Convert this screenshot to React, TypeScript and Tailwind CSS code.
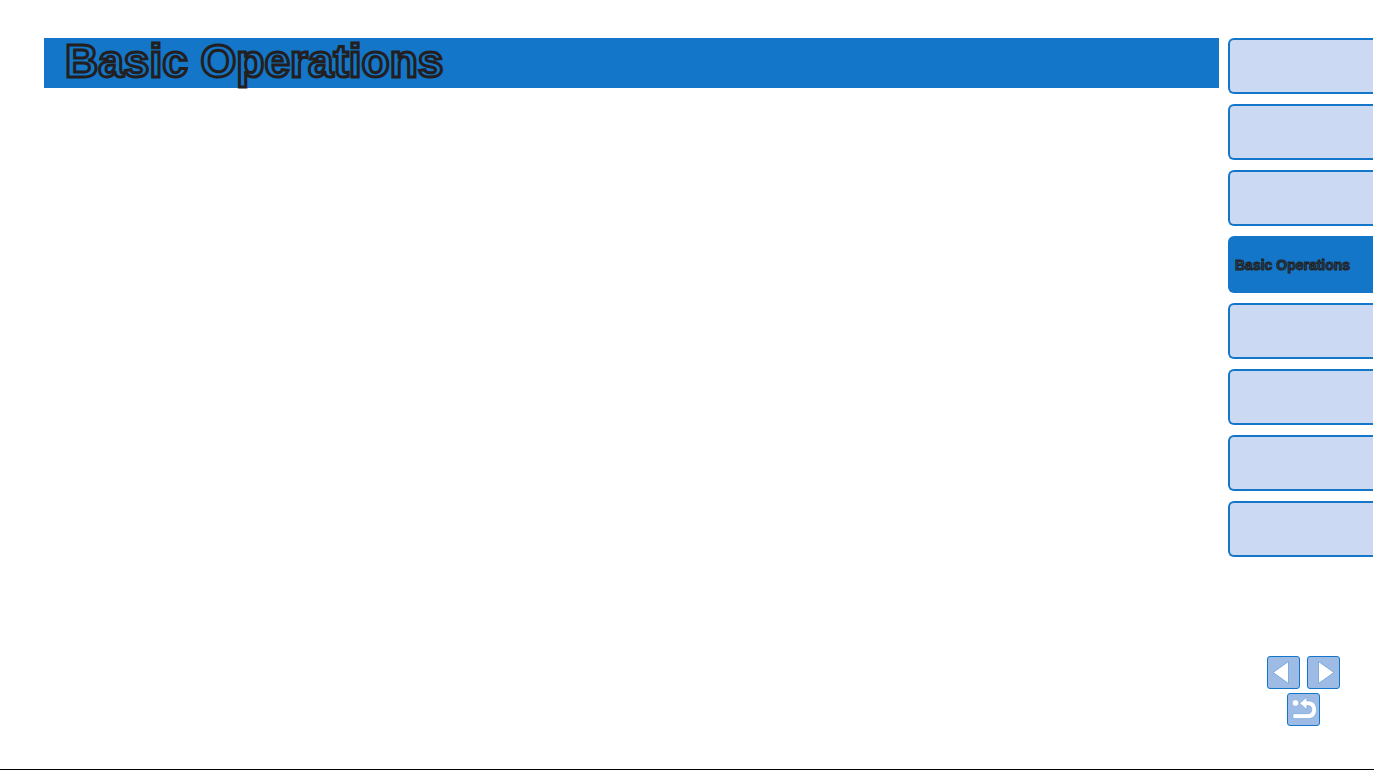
import type { ReactNode } from "react";

const sections = ["", "", "", "Basic Operations", "", "", "", ""];

function NavButton({ label, children }: { label: string; children: ReactNode }) {
  return (
    <button
      type="button"
      aria-label={label}
      className="flex size-[33px] items-center justify-center rounded-[3px] border border-[#1376c8] bg-[#9dbbe5]"
    >
      <svg viewBox="0 0 33 33" className="size-[33px] shrink-0" aria-hidden="true">
        {children}
      </svg>
    </button>
  );
}

export default function App() {
  return (
    <div className="flex min-h-screen flex-col border-b border-black bg-white font-['Liberation_Sans',Arial,sans-serif]">
      <div className="flex grow pt-[38px] pr-px pl-11">
        <main className="grow">
          <header className="flex h-[50px] items-center bg-[#1376c8] pl-[21px]">
            <h1 className="pb-1 text-[46px] leading-[46px] font-bold whitespace-nowrap text-[#1376c8] [-webkit-text-stroke:3px_#231f20]">
              Basic Operations
            </h1>
          </header>
        </main>
        <aside className="ml-[9px] flex w-[145px] shrink-0 flex-col">
          <nav aria-label="Sections" className="flex h-[519px] flex-col justify-between">
            {sections.map((title, index) => (
              <a
                key={index}
                href={`#section-${index + 1}`}
                aria-label={title || `Section ${index + 1}`}
                className={
                  title
                    ? "flex h-[57px] items-center rounded-l-md bg-[#1376c8] pt-px pl-[7px] text-[14px] font-bold whitespace-nowrap text-[#1f4468] [-webkit-text-stroke:1px_#231f20]"
                    : "flex h-14 items-center rounded-l-md border-2 border-r-0 border-[#1376c8] bg-[#cbd9f3]"
                }
              >
                {title}
              </a>
            ))}
          </nav>
          <div className="mt-[99px] ml-[39px] flex w-[73px] flex-wrap justify-center gap-x-[7px] gap-y-1">
            <NavButton label="Previous page">
              <path d="M6 16.5 21.5 5.5V27.5Z" fill="#fff" stroke="#5b98d6" strokeWidth="0.7" />
            </NavButton>
            <NavButton label="Next page">
              <path d="M27 16.5 11.5 5.5V27.5Z" fill="#fff" stroke="#5b98d6" strokeWidth="0.7" />
            </NavButton>
            <NavButton label="Back">
              <circle cx="8.5" cy="10" r="3.2" fill="#fff" stroke="#5b98d6" strokeWidth="0.4" />
              <path
                d="M12.6 10.2 19.8 4.2V8H22C26.8 8 29.5 12 29.5 16.8S26.5 25.6 22 25.6H6V20.7H21C23.5 20.7 24.8 19 24.8 16.6S23.5 12.6 21 12.6H19.8V16.6Z"
                fill="#fff"
                stroke="#5b98d6"
                strokeWidth="0.5"
              />
            </NavButton>
          </div>
        </aside>
      </div>
    </div>
  );
}
